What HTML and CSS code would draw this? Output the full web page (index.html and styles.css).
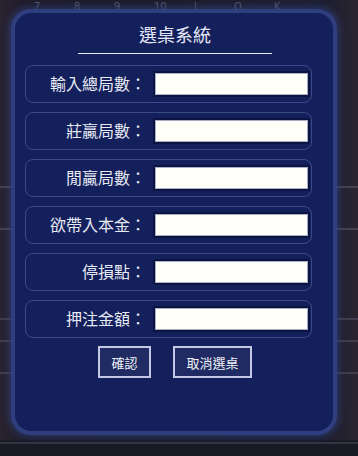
FILE: index.html
```html
<!DOCTYPE html>
<html>
<head>
<meta charset="utf-8">
<link rel="stylesheet" href="styles.css">
</head>
<body>
<div class="stage">
  <div class="ranks">
    <span>7</span><span>8</span><span>9</span><span>10</span><span>J</span><span>Q</span><span>K</span>
  </div>
  <div class="bg-lines"></div>
  <div class="panel">
    <div class="title">選桌系統</div>
    <div class="rule"></div>
    <div class="rows">
      <div class="row"><span class="label">輸入總局數：</span><input class="field" type="text"></div>
      <div class="row"><span class="label">莊贏局數：</span><input class="field" type="text"></div>
      <div class="row"><span class="label">閒贏局數：</span><input class="field" type="text"></div>
      <div class="row"><span class="label">欲帶入本金：</span><input class="field" type="text"></div>
      <div class="row"><span class="label">停損點：</span><input class="field" type="text"></div>
      <div class="row"><span class="label">押注金額：</span><input class="field" type="text"></div>
    </div>
    <div class="actions">
      <button class="btn btn-ok">確認</button>
      <button class="btn btn-cancel">取消選桌</button>
    </div>
  </div>
</div>
</body>
</html>
```
FILE: styles.css
```css
html, body {
  margin: 0;
  padding: 0;
}
body {
  width: 358px;
  height: 456px;
  overflow: hidden;
  font-family: "Noto Sans CJK TC", "Noto Sans", sans-serif;
}
.stage {
  position: relative;
  width: 358px;
  height: 456px;
  background:
    linear-gradient(to bottom, transparent 440px, #181a24 440px),
    linear-gradient(to right, #2a2330 0px, #1e1c2a 30px, #1c1e30 320px, #2a2430 358px);
  overflow: hidden;
}
.bg-lines {
  position: absolute;
  inset: 0;
  background:
    linear-gradient(to bottom, transparent 186px, rgba(120,120,150,.35) 186px, rgba(120,120,150,.35) 188px, transparent 188px),
    linear-gradient(to bottom, transparent 228px, rgba(120,120,150,.35) 228px, rgba(120,120,150,.35) 230px, transparent 230px),
    linear-gradient(to bottom, transparent 318px, rgba(120,120,150,.3) 318px, rgba(120,120,150,.3) 320px, transparent 320px),
    linear-gradient(to bottom, transparent 340px, rgba(120,120,150,.3) 340px, rgba(120,120,150,.3) 342px, transparent 342px),
    linear-gradient(to bottom, transparent 372px, rgba(120,120,150,.3) 372px, rgba(120,120,150,.3) 374px, transparent 374px),
    linear-gradient(to bottom, transparent 442px, rgba(90,90,120,.4) 442px, rgba(90,90,120,.4) 444px, transparent 444px);
}
.ranks {
  display: flex;
  padding: 1px 0 0 34px;
  height: 12px;
  font-family: "DejaVu Sans", sans-serif;
  font-size: 10px;
  line-height: 11px;
  color: #55586a;
}
.ranks span {
  width: 40px;
}
.panel {
  position: absolute;
  left: 15px;
  top: 13px;
  width: 318px;
  height: 418px;
  box-sizing: border-box;
  background: #14205b;
  border-radius: 16px;
  box-shadow: 0 0 0 4px #2f3e7e, 0 0 6px 7px rgba(50, 70, 140, 0.5);
  padding-top: 10px;
}
.title {
  text-align: center;
  color: #e4e8f6;
  font-size: 18px;
  line-height: 22px;
  height: 22px;
  padding-left: 2px;
}
.rule {
  width: 194px;
  height: 1px;
  background: #e6e8f4;
  margin: 8px 0 0 63px;
}
.rows {
  display: flex;
  flex-direction: column;
  gap: 9px;
  margin: 11px 0 0 10px;
  width: 287px;
}
.row {
  box-sizing: border-box;
  height: 38px;
  border: 1px solid #3a4a86;
  border-radius: 8px;
  display: flex;
  align-items: center;
  justify-content: flex-end;
  padding-right: 3px;
}
.label {
  color: #e8eaf4;
  font-size: 16px;
  line-height: 20px;
  margin-right: 9px;
  margin-top: -2px;
}
.field {
  box-sizing: border-box;
  width: 153px;
  height: 22px;
  margin: 0;
  padding: 0;
  background: #fffffa;
  border: 1px solid #a8acc4;
  box-shadow: 0 0 0 2px #0b1442;
  outline: none;
}
.actions {
  display: flex;
  gap: 22px;
  margin: 8px 0 0 83px;
}
.btn {
  box-sizing: border-box;
  height: 32px;
  background: #1f2b62;
  color: #f0f2f8;
  font-family: "Noto Sans CJK TC", sans-serif;
  font-size: 13px;
  border: 2px solid #c4c8e6;
  padding: 0;
  margin: 0;
}
.btn-ok {
  width: 53px;
}
.btn-cancel {
  width: 79px;
}
```
